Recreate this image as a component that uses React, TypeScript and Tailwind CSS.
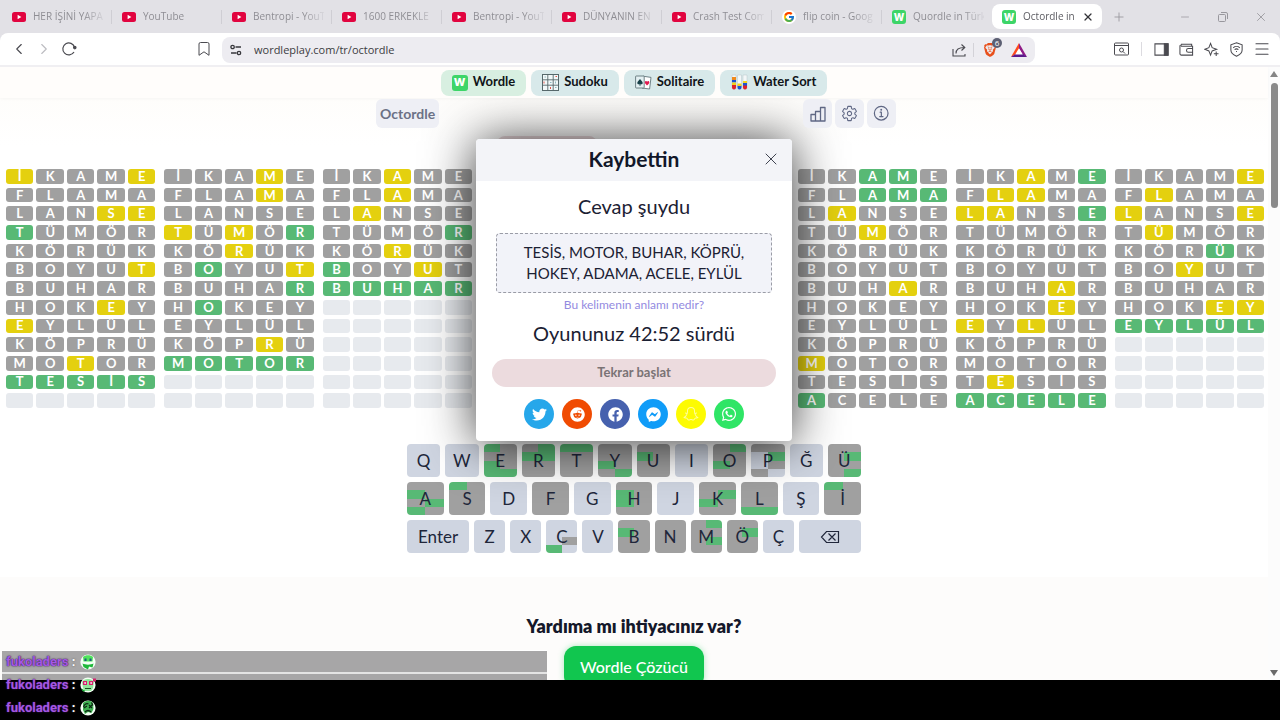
import React, { useState } from 'react'
import clsx from 'clsx'
import { ChevronLeft, ChevronRight, Minus, Plus, X, Menu } from 'lucide-react'
import { FaTwitter, FaReddit, FaFacebook, FaFacebookMessenger, FaWhatsapp } from 'react-icons/fa'
import { PiSnapchatLogo } from 'react-icons/pi'
import { FcGoogle } from 'react-icons/fc'
import { SiBrave } from 'react-icons/si'
import { IoSettingsOutline, IoInformationCircleOutline } from 'react-icons/io5'

type Score = 'green' | 'yellow' | 'gray'

const ANSWERS = ['TESİS', 'MOTOR', 'BUHAR', 'KÖPRÜ', 'HOKEY', 'ADAMA', 'ACELE', 'EYLÜL']
const GUESSES = [
  'İKAME', 'FLAMA', 'LANSE', 'TÜMÖR', 'KÖRÜK', 'BOYUT', 'BUHAR',
  'HOKEY', 'EYLÜL', 'KÖPRÜ', 'MOTOR', 'TESİS', 'ACELE',
]
const ROWS = 13

const KEY_ROWS = [
  ['Q', 'W', 'E', 'R', 'T', 'Y', 'U', 'I', 'O', 'P', 'Ğ', 'Ü'],
  ['A', 'S', 'D', 'F', 'G', 'H', 'J', 'K', 'L', 'Ş', 'İ'],
  ['Enter', 'Z', 'X', 'C', 'V', 'B', 'N', 'M', 'Ö', 'Ç', '⌫'],
]

const TABS = [
  { title: 'HER İŞİNİ YAPA', icon: 'youtube' },
  { title: 'YouTube', icon: 'youtube' },
  { title: 'Bentropi - YouT', icon: 'youtube' },
  { title: '1600 ERKEKLE', icon: 'youtube' },
  { title: 'Bentropi - YouT', icon: 'youtube' },
  { title: 'DÜNYANIN EN', icon: 'youtube' },
  { title: 'Crash Test Com', icon: 'youtube' },
  { title: 'flip coin - Goog', icon: 'google' },
  { title: 'Quordle in Türk', icon: 'wordle' },
  { title: 'Octordle in', icon: 'wordle', active: true },
]

const scoreGuess = (guess: string, answer: string): Score[] => {
  const result: Score[] = Array(5).fill('gray')
  const left = answer.split('')
  guess.split('').forEach((ch, i) => {
    if (answer[i] === ch) {
      result[i] = 'green'
      left[i] = ''
    }
  })
  guess.split('').forEach((ch, i) => {
    const at = left.indexOf(ch)
    if (result[i] !== 'green' && at >= 0) {
      result[i] = 'yellow'
      left[at] = ''
    }
  })
  return result
}

// Guesses stop counting for a board once it is solved
const guessesFor = (answer: string) => {
  const solvedAt = GUESSES.indexOf(answer)
  return solvedAt < 0 ? GUESSES : GUESSES.slice(0, solvedAt + 1)
}

const keyCell = (letter: string, answer: string) => {
  const used = guessesFor(answer).filter(g => g.includes(letter))
  if (!used.length) return 'bg-[#cfd5e1]'
  const hit = used.some(g => scoreGuess(g, answer).some((s, i) => s === 'green' && g[i] === letter))
  return hit ? 'bg-[#58b975]' : 'bg-[#a0a0a0]'
}

const YoutubeIcon = () => (
  <svg viewBox="0 0 14 10" className="w-3.5 h-2.5">
    <rect width="14" height="10" rx="2.5" fill="#e1043f" />
    <path d="M5.6 2.8 9.4 5 5.6 7.2z" fill="#fff" />
  </svg>
)

const WordleIcon = ({ className }: { className?: string }) => (
  <span
    className={clsx(
      'flex items-center justify-center rounded-[3px] bg-[#3dd568] font-["Inter",sans-serif] font-extrabold text-white leading-none',
      className
    )}
  >
    W
  </span>
)

const SudokuIcon = () => (
  <svg viewBox="0 0 17 17" className="w-[17px] h-[17px]">
    <rect x=".5" y=".5" width="16" height="16" fill="#f1f8f9" stroke="#56686b" />
    <path d="M5.8 0v17M11.2 0v17M0 5.8h17M0 11.2h17" stroke="#56686b" strokeWidth=".9" />
    <path d="M2 7.500v2M8.500 13v2M13.500 2.500H15" stroke="#e0574d" strokeWidth="1" />
    <path d="M2.500 3h1.500M8 8.500h1.500M13 13.500h1.500M13.500 7.500v2" stroke="#8fb9bf" strokeWidth="1" />
  </svg>
)

const SolitaireIcon = () => (
  <svg viewBox="0 0 17 15" className="w-[17px] h-[15px]">
    <path d="M8 1.2 16 2.4 14.6 14 7 13z" fill="#fff" stroke="#51666b" strokeWidth=".8" />
    <rect x=".6" y="1" width="8.6" height="12" rx=".6" fill="#e3f0f2" stroke="#51666b" strokeWidth=".8" />
    <path d="M5 4C3.500 6 2.300 6.600 2.300 8c0 1.500 1.800 1.700 2.400.7L4.200 10.500h1.600L5.300 8.700c.6 1 2.400.8 2.400-.7C7.700 6.600 6.500 6 5 4z" fill="#174048" />
    <path d="M12 10.500C10.300 8.800 9.600 8 9.900 6.800c.3-1.200 1.800-1.200 2.200-.1.500-1 2-.9 2.200.3.200 1.200-.7 2.100-2.300 3.500z" fill="#e01a4f" />
  </svg>
)

const WaterIcon = () => (
  <svg viewBox="0 0 17 17" className="w-[17px] h-[17px]">
    <path d="M1 1v12.500a2 2 0 0 0 4 0V1zM6.500 1v12.500a2 2 0 0 0 4 0V1zM12 1v12.500a2 2 0 0 0 4 0V1z" fill="#f3f7f8" stroke="#b9c6ca" strokeWidth=".5" />
    <path d="M1 3h4v3H1z" fill="#f08a1d" />
    <path d="M1 6h4v2.500H1zM6.500 11.500h4v2a2 2 0 0 1-4 0z" fill="#1b51d0" />
    <path d="M1 8.500h4v2.500H1zM6.500 9.500h4V12h-4zM12 7h4v2.500h-4z" fill="#f3d21b" />
    <path d="M1 11h4v2.500a2 2 0 0 1-4 0zM12 11h4v2.500a2 2 0 0 1-4 0z" fill="#de2029" />
    <path d="M12 9h4v2.500h-4z" fill="#1b51d0" />
  </svg>
)

const StatsIcon = () => (
  <svg viewBox="0 0 16 16" className="w-4 h-4" fill="none" stroke="#5f6784" strokeWidth="1.300" strokeLinejoin="round">
    <path d="M1 8.500h4.500V15H1zM5.500 5.500h5V15h-5zM10.500 1.500H15V15h-4.500z" />
  </svg>
)

const ReloadIcon = () => (
  <svg viewBox="0 0 16 16" className="w-4 h-4" fill="none" stroke="#4a4a50" strokeWidth="1.200">
    <path d="M13 11A6 6 0 1 1 13.600 6.300" />
    <circle cx="13.800" cy="6.600" r="1.200" fill="#4a4a50" />
  </svg>
)

const TuneIcon = () => (
  <svg viewBox="0 0 12 12" className="w-3 h-3" fill="none" stroke="#37373c" strokeWidth="1.300">
    <circle cx="2.600" cy="3" r="1.700" />
    <path d="M5.500 3H11M1 9h5.500" />
    <circle cx="9" cy="9" r="1.700" />
  </svg>
)

const ShareIcon = () => (
  <svg viewBox="0 0 14 14" className="w-3.5 h-3.5" fill="none" stroke="#4a4a50" strokeWidth="1.100">
    <path d="M1 6v7h12v-2M4 10.500C4 6.500 6.500 4.500 12.500 4.500M9.500 1.500l3.300 3-3.300 3" />
  </svg>
)

const TriangleIcon = () => (
  <svg viewBox="0 0 16 14" className="w-4 h-3.5">
    <path d="M8 0 0 14 8 9z" fill="#ff4a1c" />
    <path d="M8 0l8 14-4.500-2.500L8 5.500z" fill="#8f1b86" />
    <path d="M0 14h16l-4-3H4.500z" fill="#5b1a8c" />
    <path d="M8 5.200 11.800 11.400H4.200z" fill="#fff" />
  </svg>
)

const toolIcons: { name: string; art: React.ReactNode }[] = [
  {
    name: 'Sidebar',
    art: (
      <>
        <path d="M1 2h14v12H1z" />
        <path d="M11 2h4v12h-4z" fill="currentColor" />
      </>
    ),
  },
  {
    name: 'Wallet',
    art: <path d="M13.500 4.500V2.500H2.500a1.500 1.500 0 0 0 0 2h12V14h-12A1.500 1.500 0 0 1 1 12.500V3.500M14.500 7H10a1.500 1.500 0 0 0 0 4h4.500" />,
  },
  {
    name: 'Leo',
    art: <path d="M7 1.500 8.700 6 13.500 7.700 8.700 9.500 7 14 5.200 9.500.8 7.700 5.200 6zM13 10v5M10.500 12.500h5" />,
  },
  {
    name: 'VPN',
    art: (
      <path d="M8 .8 14 3v5.500c0 3-2.800 5.300-6 6.700-3.200-1.400-6-3.700-6-6.700V3zM4.500 6.200a5 5 0 0 1 7 0M6 8.200a3 3 0 0 1 4 0M7.500 10.200h1" />
    ),
  },
]

const Tool = ({ label, children }: { label: string; children: React.ReactNode }) => (
  <button aria-label={label} className="flex items-center justify-center w-[25px] h-6 shrink-0">
    {children}
  </button>
)

const TabStrip = () => (
  <div className="flex h-[33px] bg-[#e2e1e6]">
    <div className="flex flex-1 min-w-0 pl-0.5 pt-1 pb-1">
      {TABS.map((tab, i) => (
        <a
          key={i}
          href="#tab"
          className={clsx(
            'relative flex flex-1 min-w-0 items-center pl-2.5 pr-2 gap-[7px] text-[10px]',
            tab.active ? 'bg-white rounded-lg text-[#5c5c62]' : 'text-[#8f8e94]'
          )}
        >
          <span className="flex w-3.5 justify-center shrink-0">
            {tab.icon === 'youtube' && <YoutubeIcon />}
            {tab.icon === 'google' && <FcGoogle className="w-3.5 h-3.5 p-px rounded-full bg-white shrink-0" />}
            {tab.icon === 'wordle' && <WordleIcon className="w-3.5 h-3.5 shrink-0 text-[10px]" />}
          </span>
          <span className="flex-1 min-w-0 whitespace-nowrap [mask-image:linear-gradient(to_right,#000_50px,transparent_74px)]">
            {tab.title}
          </span>
          {tab.active && <X className="w-3 h-3 text-[#333338]" strokeWidth={2.500} />}
          {i < 8 && <span className="absolute right-0 h-3.5 w-px bg-[#cfced4]" />}
        </a>
      ))}
    </div>
    <div className="flex w-[178px] items-center text-[#98979d]">
      <button aria-label="New tab" className="w-[34px] flex justify-center">
        <Plus className="w-3.5 h-3.5" strokeWidth={1.500} />
      </button>
      <div className="flex-1" />
      <button aria-label="Minimize" className="w-[38px] flex justify-center">
        <Minus className="w-3 h-3" strokeWidth={1.500} />
      </button>
      <button aria-label="Restore" className="w-[38px] flex justify-center">
        <svg viewBox="0 0 10 10" className="w-2.5 h-2.5" fill="none" stroke="currentColor">
          <rect x=".5" y="2.500" width="7" height="7" rx="1" />
          <path d="M3 .5h5a1.500 1.500 0 0 1 1.500 1.500v5" />
        </svg>
      </button>
      <button aria-label="Close window" className="w-[38px] flex justify-center">
        <X className="w-3.5 h-3.5" strokeWidth={1.500} />
      </button>
    </div>
  </div>
)

const Toolbar = () => (
  <div className="bg-[#e2e1e6]">
    <div className="flex h-[34px] items-center rounded-t-lg border-b-2 border-[#f0eff2] bg-white pl-1.5 pr-1.5 text-[#4a4a50]">
      <Tool label="Back"><ChevronLeft className="w-[18px] h-[18px]" strokeWidth={1.500} /></Tool>
      <Tool label="Forward"><ChevronRight className="w-[18px] h-[18px] text-[#bcbcc1]" strokeWidth={1.500} /></Tool>
      <Tool label="Reload"><ReloadIcon /></Tool>
      <div className="w-[110px] shrink-0" />
      <Tool label="Bookmark">
        <svg viewBox="0 0 12 14" className="w-3 h-3.5" fill="none" stroke="currentColor">
          <path d="M1 2a1.500 1.500 0 0 1 1.500-1.500h7A1.500 1.500 0 0 1 11 2v11.300L6 9.800l-5 3.500z" />
        </svg>
      </Tool>
      <div className="flex flex-1 min-w-0 h-[26px] mt-0.5 ml-1.5 items-center rounded-lg bg-[#edecf1] pl-2 pr-1">
        <TuneIcon />
        <input
          aria-label="Address"
          defaultValue="wordleplay.com/tr/octordle"
          className="flex-1 min-w-0 ml-3 bg-transparent text-[11px] text-[#3c3c41] outline-none"
        />
        <Tool label="Share"><ShareIcon /></Tool>
        <span className="w-px h-3.5 ml-0.5 bg-[#d3d2d8]" />
        <button aria-label="Shields" className="relative flex w-8 justify-center">
          <SiBrave className="w-3.5 h-4 text-[#e8501c]" />
          <span className="absolute -top-1 right-1 flex items-center justify-center w-2.5 h-2.5 rounded-full bg-[#5c5f73] text-[8px] leading-none text-white">
            6
          </span>
        </button>
        <Tool label="Rewards"><TriangleIcon /></Tool>
      </div>
      <div className="w-[74px] shrink-0" />
      <Tool label="Search tabs">
        <svg viewBox="0 0 15 14" className="w-[15px] h-3.5" fill="none" stroke="currentColor">
          <rect x=".5" y="1" width="14" height="12" rx="1" />
          <path d="M1 3.500h13M9 9.500l2 2" />
          <circle cx="7.500" cy="8" r="2" />
        </svg>
      </Tool>
      <span className="w-px h-3.5 mx-[7px] bg-[#dcdbe0]" />
      {toolIcons.map(t => (
        <Tool key={t.name} label={t.name}>
          <svg viewBox="0 0 16 16" className="w-[15px] h-[15px]" fill="none" stroke="currentColor" strokeWidth="1.100">
            {t.art}
          </svg>
        </Tool>
      ))}
      <Tool label="Menu"><Menu className="w-[18px] h-[18px]" strokeWidth={1.500} /></Tool>
    </div>
  </div>
)

// covered: the dialog lies over this board, so its letters are left out
const Board = ({ answer, covered }: { answer: string; covered: boolean }) => {
  const guesses = guessesFor(answer)
  return (
    <div className="grid h-[239px] grid-cols-5 grid-rows-[repeat(13,minmax(0,1fr))] gap-x-[3px] gap-y-1">
      {Array.from({ length: ROWS }).map((_, r) => {
        const scores = guesses[r] ? scoreGuess(guesses[r], answer) : []
        return Array.from({ length: 5 }).map((_, c) => (
          <div
            key={`${r}-${c}`}
            className={clsx(
              'flex items-center justify-center overflow-hidden rounded-[3px] text-[13px] leading-[15px] font-bold text-white',
              !scores[c] && 'bg-[#e7eaee]',
              scores[c] === 'green' && 'bg-[#58b975]',
              scores[c] === 'yellow' && 'bg-[#e4d00f]',
              scores[c] === 'gray' && 'bg-[#a0a0a0]'
            )}
          >
            {!covered && guesses[r]?.[c]}
          </div>
        ))
      })}
    </div>
  )
}

const Key = ({ label }: { label: string }) => {
  const wide = label === 'Enter' || label === '⌫'
  return (
    <button
      aria-label={label === '⌫' ? 'Sil' : label}
      className={clsx(
        'relative h-[33px] min-w-0 overflow-hidden rounded-[4px] text-[#20263a] text-[17px] leading-none',
        wide ? 'flex-[2]' : 'flex-1'
      )}
    >
      <span className="absolute inset-0 grid grid-cols-2 grid-rows-4">
        {ANSWERS.map(answer => (
          <span key={answer} className={wide ? 'bg-[#cfd5e1]' : keyCell(label, answer)} />
        ))}
      </span>
      <span className="relative flex h-full items-center justify-center">
        {label === '⌫' ? (
          <svg viewBox="0 0 20 14" className="w-5 h-3.5" fill="none" stroke="currentColor" strokeWidth="1.200">
            <path d="M6.500 1.500H18.500v11H6.500L1.500 7zM8.500 3.500l7 7M15.500 3.500l-7 7" />
          </svg>
        ) : (
          label
        )}
      </span>
    </button>
  )
}

const socials = [
  { name: 'Twitter', bg: 'bg-[#26a7ea]', icon: <FaTwitter className="w-[15px] h-[15px]" /> },
  { name: 'Reddit', bg: 'bg-[#f04b02]', icon: <FaReddit className="w-[15px] h-[15px]" /> },
  { name: 'Facebook', bg: 'bg-[#4661ae]', icon: <FaFacebook className="w-[15px] h-[15px]" /> },
  { name: 'Messenger', bg: 'bg-[#109cf8]', icon: <FaFacebookMessenger className="w-[15px] h-[15px]" /> },
  { name: 'Snapchat', bg: 'bg-[#fdfb02]', icon: <PiSnapchatLogo className="w-4 h-4 text-[#fffca0]" /> },
  { name: 'WhatsApp', bg: 'bg-[#2fe566]', icon: <FaWhatsapp className="w-4 h-4" /> },
]

const ResultModal = ({ onClose }: { onClose: () => void }) => (
  <div
    role="dialog"
    aria-label="Kaybettin"
    className="absolute z-10 top-[72px] left-1/2 -translate-x-1/2 w-[316px] rounded-[4px] bg-white text-center text-[#1b2133] shadow-[0_2px_50px_rgba(0,0,0,0.8)]"
  >
    <div className="relative flex h-[42px] items-center justify-center rounded-t-[4px] bg-[#f3f4f8] pb-0.5">
      <h2 className="text-[21px] leading-7 font-bold text-[#111729]">Kaybettin</h2>
      <button aria-label="Kapat" onClick={onClose} className="absolute right-[11px] text-[#3f4350]">
        <X className="w-5 h-5" strokeWidth={1.200} />
      </button>
    </div>
    <div className="flex flex-col items-center px-4 pt-[11px] pb-3">
      <p className="text-xl leading-7">Cevap şuydu</p>
      <div className="mt-[13px] w-[276px] rounded-[4px] border border-dashed border-[#9a9ca6] bg-[#f2f3f9] px-4 py-2 text-[15px] leading-[21px]">
        TESİS, MOTOR, BUHAR, KÖPRÜ, HOKEY, ADAMA, ACELE, EYLÜL
      </div>
      <a href="#anlam" className="mt-1 text-xs leading-4 text-[#938adf]">Bu kelimenin anlamı nedir?</a>
      <p className="mt-1.5 text-xl leading-7">Oyununuz 42:52 sürdü</p>
      <button className="mt-3 h-7 w-full rounded-full bg-[#ecdbde] text-[13px] font-bold text-[#7a7375]">Tekrar başlat</button>
      <div className="mt-3 flex gap-2">
        {socials.map(s => (
          <a key={s.name} href="#share" aria-label={s.name} className={clsx('flex w-[30px] h-[30px] items-center justify-center rounded-full text-white', s.bg)}>
            {s.icon}
          </a>
        ))}
      </div>
    </div>
  </div>
)

const NAV = [
  { name: 'Wordle', icon: <WordleIcon className="w-4 h-4 text-[11px]" />, bg: 'bg-[#d8efe1]' },
  { name: 'Sudoku', icon: <SudokuIcon />, bg: 'bg-[#d8e9ea]' },
  { name: 'Solitaire', icon: <SolitaireIcon />, bg: 'bg-[#d8e9ea]' },
  { name: 'Water Sort', icon: <WaterIcon />, bg: 'bg-[#d8e9ea]' },
]

const headerButtons = [
  { label: 'İstatistik', icon: <StatsIcon /> },
  { label: 'Ayarlar', icon: <IoSettingsOutline className="w-[17px] h-[17px]" /> },
  { label: 'Bilgi', icon: <IoInformationCircleOutline className="w-[19px] h-[19px]" /> },
]

const Emote = ({ kind }: { kind: number }) => (
  <svg viewBox="0 0 16 16" className="w-4 h-4">
    <circle cx="8" cy="8" r="7.600" fill="#f3fff4" />
    {kind === 0 && (
      <>
        <path d="M3 3C5 .5 11 .5 13 3l-.5 4.500h-9z" fill="#4fe35c" />
        <path d="M2.500 9.500c3 1.500 8 1.500 11 0l-1 4L9 12.500 8 15.500 3.500 13z" fill="#1fb83a" />
        <path d="M4.500 4.500h2v2.500h-2zM9.500 4.500h2v2.500h-2z" fill="#1b5a7c" />
      </>
    )}
    {kind === 1 && (
      <>
        <path d="M2 5C4 1 12 1 14 5l-1 6-2 3H5l-2-3z" fill="#8fe79a" />
        <path d="M3 4h4v4H3zM9 4h4v4H9zM13 1.500h3v3h-3z" fill="#d5216b" />
        <path d="M4.500 5h1.200v2H4.500zM10.500 5h1.200v2h-1.200z" fill="#fff" />
        <path d="M1.500 11.500 5 13.500 4 15 2 13.500z" fill="#18a532" />
        <path d="M5 11.500h6" stroke="#174f22" />
      </>
    )}
    {kind === 2 && (
      <>
        <path d="M3 3C6 0 11 0 13 3l.5 6-2 4L8 12l-3 2-2-4z" fill="#3fae50" />
        <path d="M3.500 7c1-3 3-4 5-3M4 8l3-2M9 5l3 3M9 8l3-3M5 12c2-2 4-2 6 0M11.500 2.500l1.500 3" stroke="#0c2713" strokeWidth="1.200" fill="none" />
      </>
    )}
  </svg>
)

const Chat = () => (
  <div className="absolute bottom-0 left-0 z-20 w-[547px] pb-px font-['Roboto',sans-serif] text-[13px] font-bold">
    {[0, 1, 2].map(i => (
      <div key={i} className="flex h-[23px] items-center gap-[5px] pl-1.5">
        <span>
          <span className="text-[#a557e4] [text-shadow:0_0_1px_#3b1a5a,0_0_2px_#3b1a5a]">fukoladers</span>
          <span className="text-white [text-shadow:0_0_2px_#555]"> :</span>
        </span>
        <Emote kind={i} />
      </div>
    ))}
  </div>
)

export default function App() {
  const [open, setOpen] = useState(true)

  return (
    <div className="relative flex h-screen flex-col overflow-hidden bg-black font-['Open_Sans',sans-serif]">
      <TabStrip />
      <Toolbar />

      <div className="flex flex-1 min-h-0 overflow-hidden bg-[#fdfcfb]">
        <div className="relative flex-1 min-w-0 font-['Lato',sans-serif]">
          <nav className="relative z-20 flex h-[31px] items-center justify-center gap-[5px] bg-[#fffdfb] shadow-[0_1px_3px_rgba(0,0,0,0.03)]">
            {NAV.map(n => (
              <a key={n.name} href="#game" className={clsx('flex h-[26px] items-center gap-[5px] rounded-lg px-[11px] text-[13px] font-bold text-[#101418]', n.bg)}>
                {n.icon}
                <span className="pb-0.5">{n.name}</span>
              </a>
            ))}
          </nav>

          <div className="bg-linear-to-b from-[#fefdfb] to-white to-10% pb-6">
            <div className="relative z-20 mx-auto flex w-full max-w-[524px] gap-[3px] pl-1 pt-px">
              <a href="#octordle" className="flex h-[29px] items-center rounded-md bg-[#eeeff5] px-1 text-sm font-bold text-[#6b7186]">
                Octordle
              </a>
              <div className="flex-1" />
              {headerButtons.map(b => (
                <button key={b.label} aria-label={b.label} className="flex w-[29px] h-[29px] items-center justify-center rounded-md bg-[#eeeff5] text-[#5f6784]">
                  {b.icon}
                </button>
              ))}
            </div>
            <div className="mx-auto mt-2 mb-2 flex h-6 max-w-[274px]">
              <button aria-label="Tekrar başlat" className="w-[100px] rounded-lg bg-[#ecdbde]" />
            </div>

            <div className="grid grid-cols-8 gap-x-[9px] pl-1.5 pr-1 pt-px">
              {ANSWERS.map((answer, i) => (
                <Board key={answer} answer={answer} covered={open && (i === 3 || i === 4)} />
              ))}
            </div>

            <div className="mx-auto mt-9 flex w-full max-w-[454px] flex-col gap-[5px]">
              {KEY_ROWS.map((row, i) => (
                <div key={i} className="flex gap-[5px]">
                  {row.map(k => (
                    <Key key={k} label={k} />
                  ))}
                </div>
              ))}
            </div>
          </div>

          <section className="flex flex-col items-center pt-[35px]">
            <h3 className="text-lg leading-7 font-extrabold text-[#14182a]">Yardıma mı ihtiyacınız var?</h3>
            <a href="#solver" className="mt-1.5 flex h-[42px] items-center rounded-xl bg-[#11c64f] px-4 text-base font-medium text-white shadow-[0_0_6px_rgba(17,198,79,0.35)]">
              Wordle Çözücü
            </a>
          </section>

          {open && <ResultModal onClose={() => setOpen(false)} />}

          <div className="absolute bottom-0 left-0.5 z-10 flex h-[30px] w-[545px] flex-col border-t border-white">
            <div className="h-[23px] border-b-2 border-[#e4e4e4] bg-[#a7a6a7]" />
            <div className="flex-1 bg-[#a7a6a7]" />
          </div>
        </div>

        <div className="flex w-3 flex-col items-center justify-between bg-[#fcfcfc] py-1">
          <svg viewBox="0 0 8 6" className="w-2 h-1.5"><path d="M4 0 8 6H0z" fill="#858585" /></svg>
          <div className="mt-1.5 h-[125px] w-[7px] rounded-full bg-[#8a8a8a]" />
          <div className="flex-1" />
          <svg viewBox="0 0 8 6" className="w-2 h-1.5"><path d="M4 6 0 0h8z" fill="#6a6a6a" /></svg>
        </div>
      </div>

      <div className="h-10 shrink-0 bg-black" />
      <Chat />
    </div>
  )
}
